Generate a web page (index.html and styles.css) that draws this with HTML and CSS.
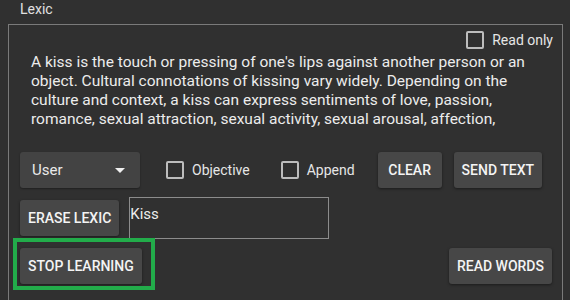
FILE: index.html
```html
<!DOCTYPE html>
<html>
<head>
<meta charset="utf-8">
<link rel="stylesheet" href="styles.css">
</head>
<body>
<div class="title">Lexic</div>
<div class="panel">
  <div class="top-row">
    <label class="check"><span class="box"></span><span class="check-label">Read only</span></label>
  </div>
  <div class="text">A kiss is the touch or pressing of one's lips against another person or an object. Cultural connotations of kissing vary widely. Depending on the culture and context, a kiss can express sentiments of love, passion, romance, sexual attraction, sexual activity, sexual arousal, affection,</div>
  <div class="controls">
    <div class="select"><span>User</span><span class="arrow"></span></div>
    <label class="check objective"><span class="box"></span><span class="check-label">Objective</span></label>
    <label class="check append"><span class="box"></span><span class="check-label">Append</span></label>
    <button class="btn clear">CLEAR</button>
    <button class="btn send">SEND TEXT</button>
  </div>
  <div class="row2">
    <button class="btn">ERASE LEXIC</button>
    <div class="input">Kiss</div>
  </div>
  <div class="row3">
    <div class="hl-wrap">
      <button class="btn">STOP LEARNING</button>
      <div class="highlight"></div>
    </div>
    <button class="btn read">READ WORDS</button>
  </div>
</div>
</body>
</html>
```
FILE: styles.css
```css
html, body {
  margin: 0;
  padding: 0;
  background: #303030;
  height: 300px;
  overflow: hidden;
}
body {
  font-family: Roboto, "Liberation Sans", sans-serif;
  color: #e6e6e6;
}
.title {
  height: 24px;
  padding-left: 20px;
  font-size: 14px;
  line-height: 19px;
  color: #e0e0e0;
}
.panel {
  margin: 0 7px 0 8px;
  border: 1px solid #7a7a7a;
  border-bottom: none;
  height: 290px;
  padding: 0 0 0 11px;
}
.top-row {
  display: flex;
  justify-content: flex-end;
  margin-top: 6px;
  padding-right: 9px;
  height: 18px;
}
.check {
  display: flex;
  align-items: center;
  font-size: 14px;
  color: #e6e6e6;
}
.box {
  width: 14px;
  height: 14px;
  border: 2px solid #bdbdbd;
  border-radius: 2px;
  margin-right: 8px;
}
.check-label {
  line-height: 18px;
}
.text {
  margin-top: 4px;
  margin-left: 11px;
  margin-right: 5px;
  font-size: 15.5px;
  line-height: 19px;
  height: 76px;
  color: #ececec;
}
.controls {
  display: flex;
  align-items: center;
  margin-top: 23px;
  height: 36px;
}
.select {
  width: 120px;
  height: 36px;
  box-sizing: border-box;
  background: #434343;
  border-radius: 3px;
  box-shadow: 0 1px 2px rgba(0,0,0,0.35);
  display: flex;
  align-items: center;
  justify-content: space-between;
  padding: 0 15px 0 12px;
  font-size: 15px;
  color: #eaeaea;
}
.arrow {
  width: 0;
  height: 0;
  border-left: 5px solid transparent;
  border-right: 5px solid transparent;
  border-top: 5px solid #f0f0f0;
}
.objective { margin-left: 26px; }
.append { margin-left: 31px; }
.btn {
  height: 36px;
  min-width: 64px;
  padding: 0 8px;
  border: none;
  border-radius: 3px;
  background: #474747;
  color: #f4f4f4;
  font-family: Roboto, "Liberation Sans", sans-serif;
  font-weight: 500;
  font-size: 14px;
  box-shadow: 0 1px 3px rgba(0,0,0,0.45);
}
.clear { margin-left: 23px; }
.send { margin-left: 12px; }
.row2 {
  display: flex;
  align-items: center;
  margin-top: 9px;
  height: 42px;
}
.input {
  margin-left: 10px;
  width: 200px;
  border: 1px solid #8c8c8c;
  font-size: 15px;
  line-height: 19px;
  padding-top: 7px;
  box-sizing: border-box;
  height: 42px;
  color: #ececec;
}
.row3 {
  display: flex;
  justify-content: space-between;
  margin-top: 9px;
  padding-right: 10px;
}
.hl-wrap {
  position: relative;
}
.highlight {
  position: absolute;
  left: -7px;
  top: -10px;
  width: 134px;
  height: 44px;
  border: 4px solid #22ac4a;
}
```
